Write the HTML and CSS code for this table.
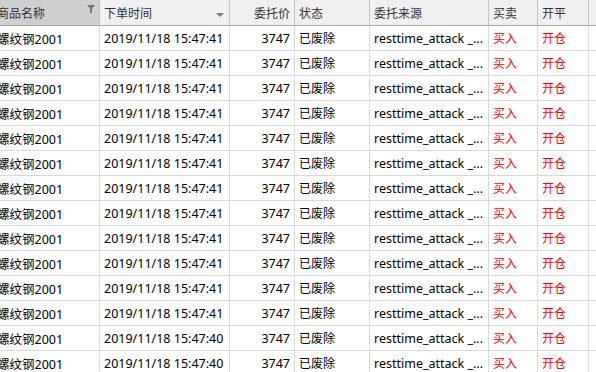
FILE: index.html
```html
<!DOCTYPE html>
<html>
<head>
<meta charset="utf-8">
<link rel="stylesheet" href="styles.css">
</head>
<body>
<div class="grid">
  <div class="row head">
    <div class="c c1 sorted">商品名称<svg class="filter" width="8" height="8" viewBox="0 0 8 8"><path d="M0 0H8L5 3.5V8H3V3.5Z" fill="#777"/></svg></div>
    <div class="c c2">下单时间<svg class="drop" width="8" height="4" viewBox="0 0 8 4"><path d="M0 0H8L4 4Z" fill="#808080"/></svg></div>
    <div class="c c3 r">委托价</div>
    <div class="c c4">状态</div>
    <div class="c c5">委托来源</div>
    <div class="c c6">买卖</div>
    <div class="c c7">开平</div>
    <div class="c c8"></div>
  </div>
  <div class="row"><div class="c c1">螺纹钢2001</div><div class="c c2">2019/11/18 15:47:41</div><div class="c c3 r">3747</div><div class="c c4">已废除</div><div class="c c5">resttime_attack _...</div><div class="c c6 red">买入</div><div class="c c7 red">开仓</div><div class="c c8"></div></div>
  <div class="row"><div class="c c1">螺纹钢2001</div><div class="c c2">2019/11/18 15:47:41</div><div class="c c3 r">3747</div><div class="c c4">已废除</div><div class="c c5">resttime_attack _...</div><div class="c c6 red">买入</div><div class="c c7 red">开仓</div><div class="c c8"></div></div>
  <div class="row"><div class="c c1">螺纹钢2001</div><div class="c c2">2019/11/18 15:47:41</div><div class="c c3 r">3747</div><div class="c c4">已废除</div><div class="c c5">resttime_attack _...</div><div class="c c6 red">买入</div><div class="c c7 red">开仓</div><div class="c c8"></div></div>
  <div class="row"><div class="c c1">螺纹钢2001</div><div class="c c2">2019/11/18 15:47:41</div><div class="c c3 r">3747</div><div class="c c4">已废除</div><div class="c c5">resttime_attack _...</div><div class="c c6 red">买入</div><div class="c c7 red">开仓</div><div class="c c8"></div></div>
  <div class="row"><div class="c c1">螺纹钢2001</div><div class="c c2">2019/11/18 15:47:41</div><div class="c c3 r">3747</div><div class="c c4">已废除</div><div class="c c5">resttime_attack _...</div><div class="c c6 red">买入</div><div class="c c7 red">开仓</div><div class="c c8"></div></div>
  <div class="row"><div class="c c1">螺纹钢2001</div><div class="c c2">2019/11/18 15:47:41</div><div class="c c3 r">3747</div><div class="c c4">已废除</div><div class="c c5">resttime_attack _...</div><div class="c c6 red">买入</div><div class="c c7 red">开仓</div><div class="c c8"></div></div>
  <div class="row"><div class="c c1">螺纹钢2001</div><div class="c c2">2019/11/18 15:47:41</div><div class="c c3 r">3747</div><div class="c c4">已废除</div><div class="c c5">resttime_attack _...</div><div class="c c6 red">买入</div><div class="c c7 red">开仓</div><div class="c c8"></div></div>
  <div class="row"><div class="c c1">螺纹钢2001</div><div class="c c2">2019/11/18 15:47:41</div><div class="c c3 r">3747</div><div class="c c4">已废除</div><div class="c c5">resttime_attack _...</div><div class="c c6 red">买入</div><div class="c c7 red">开仓</div><div class="c c8"></div></div>
  <div class="row"><div class="c c1">螺纹钢2001</div><div class="c c2">2019/11/18 15:47:41</div><div class="c c3 r">3747</div><div class="c c4">已废除</div><div class="c c5">resttime_attack _...</div><div class="c c6 red">买入</div><div class="c c7 red">开仓</div><div class="c c8"></div></div>
  <div class="row"><div class="c c1">螺纹钢2001</div><div class="c c2">2019/11/18 15:47:41</div><div class="c c3 r">3747</div><div class="c c4">已废除</div><div class="c c5">resttime_attack _...</div><div class="c c6 red">买入</div><div class="c c7 red">开仓</div><div class="c c8"></div></div>
  <div class="row"><div class="c c1">螺纹钢2001</div><div class="c c2">2019/11/18 15:47:41</div><div class="c c3 r">3747</div><div class="c c4">已废除</div><div class="c c5">resttime_attack _...</div><div class="c c6 red">买入</div><div class="c c7 red">开仓</div><div class="c c8"></div></div>
  <div class="row"><div class="c c1">螺纹钢2001</div><div class="c c2">2019/11/18 15:47:41</div><div class="c c3 r">3747</div><div class="c c4">已废除</div><div class="c c5">resttime_attack _...</div><div class="c c6 red">买入</div><div class="c c7 red">开仓</div><div class="c c8"></div></div>
  <div class="row"><div class="c c1">螺纹钢2001</div><div class="c c2">2019/11/18 15:47:40</div><div class="c c3 r">3747</div><div class="c c4">已废除</div><div class="c c5">resttime_attack _...</div><div class="c c6 red">买入</div><div class="c c7 red">开仓</div><div class="c c8"></div></div>
  <div class="row"><div class="c c1">螺纹钢2001</div><div class="c c2">2019/11/18 15:47:40</div><div class="c c3 r">3747</div><div class="c c4">已废除</div><div class="c c5">resttime_attack _...</div><div class="c c6 red">买入</div><div class="c c7 red">开仓</div><div class="c c8"></div></div>
</div>
</body>
</html>
```

FILE: styles.css
```css
html, body {
  margin: 0;
  padding: 0;
  background: #fff;
  overflow: hidden;
}
.grid {
  margin-left: -7px;
  width: 620px;
  font-family: "Noto Sans", "Noto Sans CJK SC", sans-serif;
  font-size: 12.5px;
  color: #000;
}
.row {
  display: grid;
  grid-template-columns: 107px 130px 65px 75px 119px 49px 51px 24px;
  height: 25px;
}
.c {
  box-sizing: border-box;
  border-right: 1px solid #d9d9d9;
  border-bottom: 1px solid #d9d9d9;
  padding: 0 4px;
  display: flex;
  align-items: center;
  white-space: nowrap;
  overflow: hidden;
  position: relative;
}
.c.r {
  justify-content: flex-end;
}
.c4, .c6, .c7 {
  font-size: 12px;
}
.red {
  color: #ff0000;
}
.c8 {
  border-right: none;
}
.head {
  height: 26px;
}
.head .c {
  background: #f0f0f0;
  color: #333;
  font-size: 12px;
  border-right: 1px solid #c4c4c4;
  border-bottom: 1px solid #a8a8a8;
}
.head .c.sorted {
  background: #cfcfcf;
}
.head .c8 {
  border-right: none;
}
.filter {
  position: absolute;
  right: 4px;
  top: 5px;
}
.drop {
  position: absolute;
  right: 5px;
  top: 13px;
}
```
